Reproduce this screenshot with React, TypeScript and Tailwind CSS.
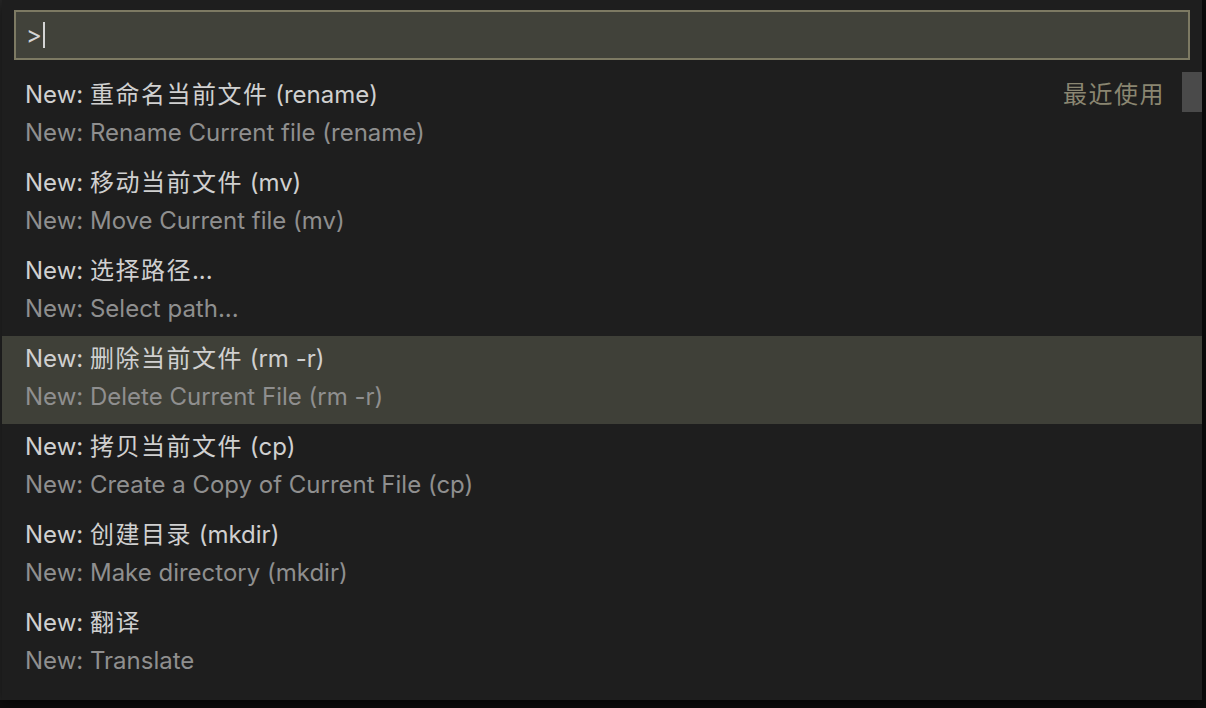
import React from "react";

const items = [
  { t: "New: 重命名当前文件 (rename)", s: "New: Rename Current file (rename)", recent: true },
  { t: "New: 移动当前文件 (mv)", s: "New: Move Current file (mv)" },
  { t: "New: 选择路径...", s: "New: Select path..." },
  { t: "New: 删除当前文件 (rm -r)", s: "New: Delete Current File (rm -r)", active: true },
  { t: "New: 拷贝当前文件 (cp)", s: "New: Create a Copy of Current File (cp)" },
  { t: "New: 创建目录 (mkdir)", s: "New: Make directory (mkdir)" },
  { t: "New: 翻译", s: "New: Translate" },
];

function Mixed({ text }: { text: string }) {
  const parts = text.split(/([\u4e00-\u9fff]+)/);
  return (
    <>
      {parts.map((p, i) =>
        /[\u4e00-\u9fff]/.test(p) ? (
          <span key={i} className="tracking-[1.5px]">{p}</span>
        ) : (
          <span key={i}>{p}</span>
        )
      )}
    </>
  );
}

export default function App() {
  return (
    <div
      className="w-[1206px] h-[708px] bg-[#0d0d0d] overflow-hidden flex"
      style={{ fontFamily: 'Inter, "Noto Sans CJK SC", sans-serif' }}
    >
      <div className="w-[2px] h-[700px] bg-[#262626]" />
      <div className="w-[1200px] h-[700px] bg-[#1e1e1e] flex flex-col shadow-[0_4px_12px_rgba(0,0,0,0.6)]">
        <div className="pt-[10px] pl-[12px] pr-[12px]">
          <div className="h-[50px] w-[1176px] border-2 border-[#7d7a63] bg-[#41423a] flex items-center pl-[10px]">
            <span className="text-[24px] text-[#d4d4d4] leading-none">&gt;</span>
            <span className="w-[2px] h-[26px] bg-[#d4d4d4] ml-[1px]" />
          </div>
        </div>
        <div className="relative mt-[12px] flex flex-col">
          {items.map((it, i) => (
            <div
              key={i}
              className={`h-[88px] pt-[4px] pl-[23px] pr-[37px] flex flex-col ${it.active ? "bg-[#3f4038]" : ""}`}
            >
              <div className="h-[38px] flex items-center justify-between">
                <span className="text-[24px] text-[#d0d0d0] whitespace-nowrap">
                  <Mixed text={it.t} />
                </span>
                {it.recent && (
                  <span className="text-[24px] text-[#8a8671] whitespace-nowrap tracking-[1.5px]">最近使用</span>
                )}
              </div>
              <div className="h-[38px] flex items-center">
                <span className="text-[24px] text-[#8f8f8f] whitespace-nowrap">{it.s}</span>
              </div>
            </div>
          ))}
          <div className="absolute right-0 top-0 w-[20px] h-[40px] bg-[#4a4a4a]" />
        </div>
      </div>
    </div>
  );
}
